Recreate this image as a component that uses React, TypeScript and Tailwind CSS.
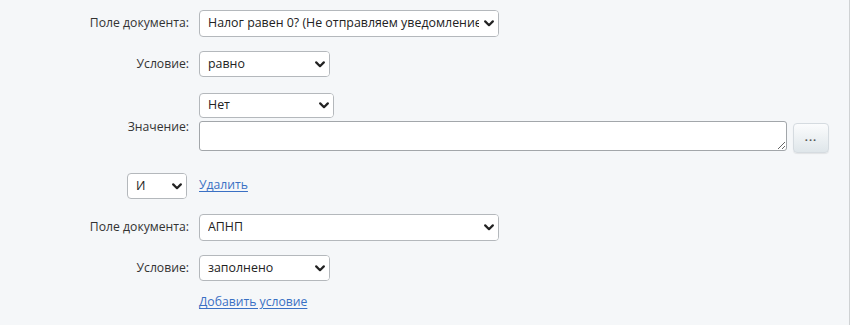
import React from 'react';

// chevron sits on a white strip so the long option text is cut before it
const Chevron: React.FC = () => (
  <span className="pointer-events-none absolute bottom-[1px] right-[1px] top-[1px] flex w-[16px] items-center justify-start rounded-r-[3px] bg-white pl-[2px]">
    <svg width="10" height="7" viewBox="0 0 10 7">
      <path d="M1.2 1.4 L5 5.2 L8.8 1.4" fill="none" stroke="#222" strokeWidth="2.2" strokeLinecap="round" strokeLinejoin="round" />
    </svg>
  </span>
);

type SelectProps = { value: string; width: string; height: string };

const Select: React.FC<SelectProps> = ({ value, width, height }) => (
  <div className={`relative ${width} ${height}`}>
    <select
      defaultValue={value}
      className="h-full w-full appearance-none overflow-hidden rounded-[4px] border border-[#b4b8bc] bg-white pl-[8px] pr-[19px] text-[12.4px] text-[#222] outline-none"
    >
      <option>{value}</option>
    </select>
    <Chevron />
  </div>
);

const Label: React.FC<{ children: React.ReactNode; className?: string }> = ({ children, className = '' }) => (
  <div className={`w-[189px] shrink-0 text-right text-[12.2px] text-[#333] ${className}`}>{children}</div>
);

const App: React.FC = () => {
  return (
    <div
      className="h-[325px] w-[850px] border-r border-[#cfd2d4] bg-[#f5f7f9] text-[12.2px] text-[#333]"
      style={{ fontFamily: '"Open Sans", "Liberation Sans", sans-serif' }}
    >
      <div className="flex flex-col pt-[10px]">
        {/* Поле документа */}
        <div className="flex items-center gap-[10px]">
          <Label>Поле документа:</Label>
          <Select value="Налог равен 0? (Не отправляем уведомление)" width="w-[300px]" height="h-[27px]" />
        </div>

        {/* Условие */}
        <div className="mt-[14px] flex items-center gap-[10px]">
          <Label>Условие:</Label>
          <Select value="равно" width="w-[131px]" height="h-[26px]" />
        </div>

        {/* Значение */}
        <div className="mt-[16px] flex items-center gap-[10px]">
          <Label className="mt-[8px]">Значение:</Label>
          <div className="flex flex-col gap-[3px]">
            <Select value="Нет" width="w-[135px]" height="h-[25px]" />
            <div className="flex items-start gap-[6px]">
              <textarea className="h-[30px] w-[588px] resize rounded-[3px] border border-[#a2a6aa] bg-white outline-none" />
              <button className="mt-[2px] h-[30px] w-[36px] rounded-[4px] border border-[#d5dbe0] bg-gradient-to-b from-[#fbfcfd] to-[#dfe6ea] pb-[4px] text-[11px] font-bold leading-none tracking-[1px] text-[#555] shadow-[0_1px_1px_rgba(0,0,0,0.08)]">
                ...
              </button>
            </div>
          </div>
        </div>

        {/* И / Удалить */}
        <div className="mt-[20px] flex items-center gap-[12px]">
          <div className="flex w-[187px] shrink-0 justify-end">
            <Select value="И" width="w-[60px]" height="h-[26px]" />
          </div>
          <a href="#" className="-mt-[2px] text-[12.2px] text-[#3a70c4] underline underline-offset-2">
            Удалить
          </a>
        </div>

        {/* Поле документа */}
        <div className="mt-[15px] flex items-center gap-[10px]">
          <Label>Поле документа:</Label>
          <Select value="АПНП" width="w-[300px]" height="h-[27px]" />
        </div>

        {/* Условие */}
        <div className="mt-[14px] flex items-center gap-[10px]">
          <Label>Условие:</Label>
          <Select value="заполнено" width="w-[131px]" height="h-[26px]" />
        </div>

        {/* Добавить условие */}
        <div className="mt-[12px] flex gap-[10px]">
          <div className="w-[189px] shrink-0" />
          <a href="#" className="text-[12.2px] text-[#3a70c4] underline underline-offset-2">
            Добавить условие
          </a>
        </div>
      </div>
    </div>
  );
};

export default App;
